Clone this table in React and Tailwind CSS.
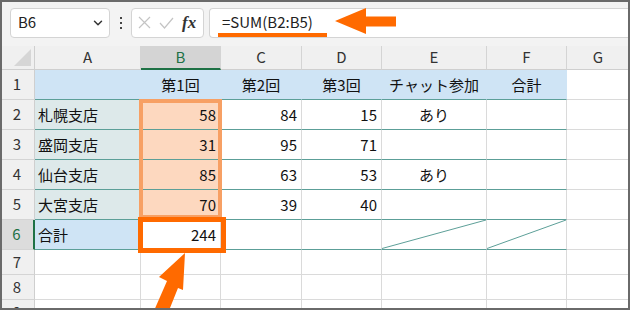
import { ChevronDown } from 'lucide-react';

const COLS = [
  { key: 'A', w: 'w-[106px]' },
  { key: 'B', w: 'w-[80px]' },
  { key: 'C', w: 'w-[81px]' },
  { key: 'D', w: 'w-[80px]' },
  { key: 'E', w: 'w-[105px]' },
  { key: 'F', w: 'w-[80px]' },
  { key: 'G', w: 'w-[63px]' },
];

const BLUE = 'bg-[#cfe4f5]';
const TEAL = 'bg-[#dde9ea]';
const PEACH = 'bg-[#fdd8bf]';

const ROWS = [
  { n: 1, h: 'h-[30px]', cells: [
    { fill: BLUE }, { t: '第1回', fill: BLUE, a: 'c' }, { t: '第2回', fill: BLUE, a: 'c' },
    { t: '第3回', fill: BLUE, a: 'c' }, { t: 'チャット参加', fill: BLUE, a: 'c' }, { t: '合計', fill: BLUE, a: 'c' }, {},
  ] },
  { n: 2, h: 'h-[30px]', cells: [
    { t: '札幌支店', fill: TEAL }, { t: '58', fill: PEACH, a: 'r' }, { t: '84', a: 'r' },
    { t: '15', a: 'r' }, { t: 'あり', a: 'c' }, {}, {},
  ] },
  { n: 3, h: 'h-[30px]', cells: [
    { t: '盛岡支店', fill: TEAL }, { t: '31', fill: PEACH, a: 'r' }, { t: '95', a: 'r' },
    { t: '71', a: 'r' }, {}, {}, {},
  ] },
  { n: 4, h: 'h-[30px]', cells: [
    { t: '仙台支店', fill: TEAL }, { t: '85', fill: PEACH, a: 'r' }, { t: '63', a: 'r' },
    { t: '53', a: 'r' }, { t: 'あり', a: 'c' }, {}, {},
  ] },
  { n: 5, h: 'h-[30px]', cells: [
    { t: '大宮支店', fill: TEAL }, { t: '70', fill: PEACH, a: 'r' }, { t: '39', a: 'r' },
    { t: '40', a: 'r' }, {}, {}, {},
  ] },
  { n: 6, h: 'h-[30px]', sel: true, cells: [
    { t: '合計', fill: BLUE }, { t: '244', a: 'r' }, {}, {}, { diag: true }, { diag: true }, {},
  ] },
  { n: 7, h: 'h-[25px]', cells: [{}, {}, {}, {}, {}, {}, {}] },
  { n: 8, h: 'h-[25px]', cells: [{}, {}, {}, {}, {}, {}, {}] },
  { n: 9, h: 'h-[25px]', cells: [{}, {}, {}, {}, {}, {}, {}] },
];

function Cell({ cell, col, row }) {
  const inTable = row.n <= 6 && col.key !== 'G';
  const align = cell.a === 'r' ? 'justify-end pr-[4px]' : cell.a === 'c' ? 'justify-center' : 'justify-start pl-[3px]';
  return (
    <div
      className={`relative flex items-center shrink-0 ${col.w} border-r ${cell.fill ? 'border-r-transparent' : 'border-r-[#dadada]'} border-b ${inTable ? 'border-b-[#5c9f98]' : 'border-b-[#dadada]'} ${cell.fill || 'bg-white'} ${align}`}
    >
      {cell.t && <span className="text-[15px] text-[#111] leading-none">{cell.t}</span>}
      {cell.diag && (
        <svg className="absolute inset-0" width="100%" height="100%" viewBox="0 0 100 30" preserveAspectRatio="none">
          <line x1="0" y1="29.5" x2="100" y2="0" stroke="#5c9f98" strokeWidth="1" vectorEffect="non-scaling-stroke" />
        </svg>
      )}
    </div>
  );
}

export default function App() {
  return (
    <div className="relative w-[630px] h-[310px] overflow-hidden bg-white" style={{ fontFamily: '"Noto Sans CJK JP", "Liberation Sans", sans-serif' }}>
      {/* formula bar */}
      <div className="flex items-center h-[46px] bg-[#f3f3f3] pl-[10px] pb-[1px]">
        <div className="flex items-center justify-between w-[100px] h-[30px] bg-white border border-[#d4d4d4] rounded-[4px] pl-[7px] pr-[4px]">
          <span className="text-[15px] text-[#222]">B6</span>
          <ChevronDown size={14} strokeWidth={2.5} className="text-[#333]" />
        </div>
        <div className="flex flex-col items-center justify-center gap-[3px] w-[21px]">
          <span className="w-[2px] h-[2px] bg-[#444]" />
          <span className="w-[2px] h-[2px] bg-[#444]" />
          <span className="w-[2px] h-[2px] bg-[#444]" />
        </div>
        <div className="flex items-center w-[73px] h-[30px] bg-white border border-[#d4d4d4] rounded-[4px] pl-[6px] gap-[8px]">
          <svg width="13" height="13" viewBox="0 0 13 13">
            <path d="M1 1 L12 12 M12 1 L1 12" stroke="#c4c4c4" strokeWidth="1.2" fill="none" />
          </svg>
          <svg width="15" height="12" viewBox="0 0 15 12">
            <path d="M1 6 L5.5 11 L14 1" stroke="#c4c4c4" strokeWidth="1.2" fill="none" />
          </svg>
          <span className="text-[17px] italic font-bold text-[#333] leading-none" style={{ fontFamily: '"Liberation Serif", serif' }}>fx</span>
        </div>
        <div className="flex items-center flex-1 h-[30px] ml-[5px] bg-white border border-[#d4d4d4] border-r-0 rounded-l-[4px] pl-[12px]">
          <span className="text-[15px] text-[#222]">=SUM(B2:B5)</span>
        </div>
      </div>

      {/* column headers */}
      <div className="flex h-[24px] bg-[#f0f0f0]">
        <div className="relative w-[35px] shrink-0 border-r border-b border-[#cfcfcf]">
          <svg className="absolute right-[3px] bottom-[3px]" width="17" height="17" viewBox="0 0 17 17">
            <polygon points="17,0 17,17 0,17" fill="#d6d6d6" />
          </svg>
        </div>
        {COLS.map((c) => (
          <div
            key={c.key}
            className={`flex items-center justify-center shrink-0 ${c.w} border-r border-[#d4d4d4] ${c.key === 'B' ? 'bg-[#d4d4d4] border-b-2 border-b-[#1e7145] text-[#1e7145]' : 'border-b border-b-[#cfcfcf] text-[#333]'} text-[15px]`}
          >
            {c.key}
          </div>
        ))}
      </div>

      {/* rows */}
      {ROWS.map((row) => (
        <div key={row.n} className={`flex ${row.h}`}>
          <div
            className={`flex items-center justify-center w-[35px] shrink-0 border-b border-[#d4d4d4] text-[15px] ${row.sel ? 'bg-[#dcdcdc] text-[#1e7145] border-r-2 border-r-[#1e7145]' : 'bg-[#f0f0f0] text-[#333] border-r border-r-[#cfcfcf]'}`}
          >
            {row.n}
          </div>
          {COLS.map((c, i) => (
            <Cell key={c.key} cell={row.cells[i]} col={c} row={row} />
          ))}
        </div>
      ))}

      {/* B2:B5 range highlight */}
      <div className="absolute left-[139px] top-[99px] w-[83px] h-[120px] border-4 border-[#f7a064] pointer-events-none" />
      {/* B6 box */}
      <div className="absolute left-[138px] top-[217px] w-[88px] h-[36px] border-[5px] border-[#ff6a00] pointer-events-none" />

      {/* formula underline + arrow */}
      <div className="absolute left-[218px] top-[33px] w-[109px] h-[4px] bg-[#ff6a00]" />
      <svg className="absolute left-[335px] top-[8px]" width="61" height="27" viewBox="0 0 61 27">
        <polygon points="0,13 31,0 31,8.5 61,8.5 61,18.5 31,18.5 31,26" fill="#ff6a00" />
      </svg>

      {/* arrow to B6 */}
      <svg className="absolute left-0 top-0" width="630" height="310" viewBox="0 0 630 310">
        <polygon points="185,253 159,277 167,281 153,313 166,318 178,288 183,290" fill="#ff6a00" />
      </svg>

      {/* window frame */}
      <div className="absolute inset-0 border-2 border-[#6a6a6a] pointer-events-none" />
    </div>
  );
}
